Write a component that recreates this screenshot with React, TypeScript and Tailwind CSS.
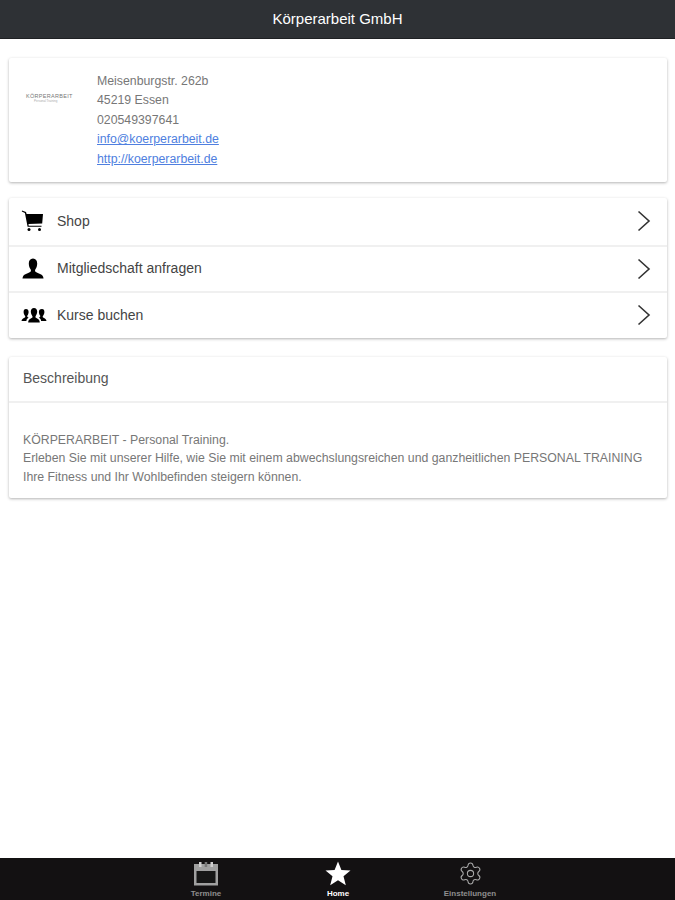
import React from 'react';
import { Settings } from 'lucide-react';

const font = "font-['Liberation_Sans',Arial,sans-serif]";

function CartIcon() {
  return (
    <svg width="24" height="24" viewBox="0 0 24 24" fill="#000">
      <path d="M1 1.500 L5 3 L5.600 5 L22 5 L21.200 14.500 L7.500 15 L7.700 16.700 L20.500 16.700 L20.500 17.800 L6.600 17.800 L3.900 4 L0.800 2.400 Z" />
      <circle cx="8" cy="20.500" r="1.500" />
      <circle cx="18.500" cy="20.500" r="1.500" />
    </svg>
  );
}

function PersonIcon() {
  return (
    <svg width="24" height="24" viewBox="0 0 24 24" fill="#000">
      <path d="M12 1.500c2.800 0 4.200 2.200 4.200 5 0 2.600-.8 4.600-1.900 5.900-.4.600-.3 1.900.3 2.400 1.600 1.200 6.300 2.300 7.400 4.600.4.800.5 1.600.5 2.100H1.500c0-.5.100-1.300.5-2.100 1.100-2.300 5.800-3.400 7.400-4.600.6-.5.700-1.800.3-2.400C8.600 11.100 7.800 9.100 7.800 6.500c0-2.800 1.400-5 4.200-5z" />
    </svg>
  );
}

function GroupIcon() {
  return (
    <svg width="26" height="24" viewBox="0 0 26 24" fill="#000">
      <path d="M5 6c1.700 0 2.600 1.300 2.600 3 0 1.500-.6 2.800-1.200 3.600-.3.400-.2 1.200.2 1.500l1 .6c-1.200.7-2.100 1.500-2.200 3.300H.5c0-2.200 2.300-2.700 3.400-3.500.4-.3.500-1.100.2-1.600C3.400 12 2.600 10.600 2.600 9c0-1.700.7-3 2.400-3z" />
      <path d="M21 6c1.700 0 2.400 1.300 2.400 3 0 1.600-.8 3-1.500 3.900-.3.500-.2 1.300.2 1.600 1.100.8 3.400 1.300 3.400 3.500h-5.400c-.1-1.800-1-2.600-2.200-3.300l1-.6c.4-.3.500-1.100.2-1.500-.6-.8-1.200-2.100-1.200-3.600 0-1.700.9-3 3.100-3z" />
      <path d="M13 5c2 0 3.200 1.500 3.200 3.600 0 1.800-.8 3.400-1.500 4.300-.4.500-.3 1.400.2 1.800 1.300 1 3.900 1.300 3.900 4.800H7.200c0-3.500 2.600-3.800 3.900-4.800.5-.4.600-1.300.2-1.800-.7-.9-1.500-2.500-1.500-4.300C9.800 6.500 11 5 13 5z" />
    </svg>
  );
}

function Chevron() {
  return (
    <svg width="14" height="22" viewBox="0 0 14 22" fill="none" stroke="#333" strokeWidth="1.600">
      <path d="M1.500 1.500 L12 11 L1.500 20.500" />
    </svg>
  );
}

function CalendarIcon() {
  return (
    <svg width="26" height="25" viewBox="0 0 26 25" fill="none">
      <rect x="1" y="3" width="24" height="21.500" fill="#a0a0a0" />
      <rect x="3.500" y="10" width="19" height="12" fill="#161616" />
      <rect x="6" y="1" width="2.500" height="5" fill="#cfcfcf" />
      <rect x="11.700" y="1" width="2.500" height="5" fill="#777" />
      <rect x="17.500" y="1" width="2.500" height="5" fill="#cfcfcf" />
    </svg>
  );
}

function StarIcon() {
  return (
    <svg width="26" height="25" viewBox="0 0 26 25" fill="#fff">
      <path d="M13 0.500 L16.400 9 L25.500 9.600 L18.500 15.300 L20.800 24.200 L13 19.300 L5.200 24.200 L7.500 15.300 L0.500 9.600 L9.600 9 Z" />
    </svg>
  );
}

const menuItems = [
  { label: 'Shop', icon: <CartIcon /> },
  { label: 'Mitgliedschaft anfragen', icon: <PersonIcon /> },
  { label: 'Kurse buchen', icon: <GroupIcon /> },
];

export default function App() {
  return (
    <div className={`${font} h-[900px] flex flex-col bg-white overflow-hidden`}>
      {/* Header */}
      <header className="h-[39px] shrink-0 flex items-center justify-center bg-[#2e3135] border-b border-[#1f2124]">
        <span className="text-white text-[15px]">Körperarbeit GmbH</span>
      </header>

      <main className="flex-1 px-[9px] pt-[19px] pr-[8px]">
        {/* Address */}
        <section className="h-[124px] rounded-[2px] shadow-[0_1px_3px_rgba(0,0,0,0.3)] flex items-start">
          <div className="w-[88px] shrink-0 flex flex-col pl-[17px] pt-[35px]">
            <span className="text-[5.500px] leading-[6px] tracking-[0.3px] text-[#777]">KÖRPERARBEIT</span>
            <span className="text-[3px] leading-[4px] pl-[8px] text-[#aaa]">Personal Training</span>
          </div>
          <div className="pt-[14px] text-[12.300px] leading-[19.400px] text-[#777]">
            <div>Meisenburgstr. 262b</div>
            <div>45219 Essen</div>
            <div>020549397641</div>
            <div className="text-[#4f7fe0] underline">info@koerperarbeit.de</div>
            <div className="text-[#4f7fe0] underline">http://koerperarbeit.de</div>
          </div>
        </section>

        {/* Links */}
        <section className="mt-[16px] rounded-[2px] shadow-[0_1px_3px_rgba(0,0,0,0.3)]">
          {menuItems.map((item, index) => (
            <div
              key={item.label}
              className={`h-[46.600px] flex items-center pl-[12px] pr-[16px] ${index > 0 ? 'border-t-2 border-[#f0f0f0]' : ''}`}
            >
              <div className="w-[36px] shrink-0">{item.icon}</div>
              <span className="flex-1 text-[14px] text-[#444]">{item.label}</span>
              <Chevron />
            </div>
          ))}
        </section>

        {/* Description */}
        <section className="mt-[19px] h-[141px] rounded-[2px] shadow-[0_1px_3px_rgba(0,0,0,0.3)]">
          <div className="h-[46px] flex items-center px-[14px] border-b-2 border-[#f0f0f0] text-[14px] text-[#555]">
            Beschreibung
          </div>
          <div className="px-[14px] pt-[28px] text-[12.300px] leading-[18.500px] text-[#777] whitespace-nowrap">
            <div>KÖRPERARBEIT - Personal Training.</div>
            <div>Erleben Sie mit unserer Hilfe, wie Sie mit einem abwechslungsreichen und ganzheitlichen PERSONAL TRAINING</div>
            <div>Ihre Fitness und Ihr Wohlbefinden steigern können.</div>
          </div>
        </section>
      </main>

      {/* Tab bar */}
      <footer className="h-[42px] shrink-0 bg-[#131112] relative">
        <div className="absolute left-[176px] w-[60px] top-[3px] flex flex-col items-center">
          <CalendarIcon />
          <span className="mt-[3px] text-[8px] leading-[9px] font-bold text-[#8e8e8e]">Termine</span>
        </div>
        <div className="absolute left-[308px] w-[60px] top-[3px] flex flex-col items-center">
          <StarIcon />
          <span className="mt-[3px] text-[8px] leading-[9px] font-bold text-white">Home</span>
        </div>
        <div className="absolute left-[430px] w-[80px] top-[3px] flex flex-col items-center">
          <Settings size={25} strokeWidth={1} className="text-[#aaa]" />
          <span className="mt-[3px] text-[8px] leading-[9px] font-bold text-[#8e8e8e]">Einstellungen</span>
        </div>
      </footer>
    </div>
  );
}
